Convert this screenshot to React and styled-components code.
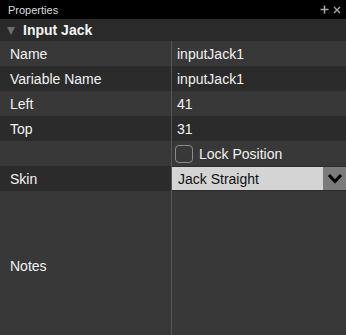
import React from 'react'
import styled, { createGlobalStyle } from 'styled-components'

const Global = createGlobalStyle`
  html, body { margin: 0; padding: 0; background: #383838; }
  body { font-family: "Liberation Sans", Arial, Helvetica, sans-serif; }
`

const Panel = styled.div`
  width: 346px;
  height: 335px;
  display: flex;
  flex-direction: column;
  background: #383838;
  color: #f2f2f2;
  overflow: hidden;
`

const TitleBar = styled.div`
  height: 19px;
  flex: none;
  background: #000;
  display: flex;
  align-items: center;
  justify-content: space-between;
  padding: 0 5px 0 8px;
  font-size: 11px;
  color: #dcdcdc;
`

const TitleTools = styled.div`
  display: flex;
  align-items: center;
  gap: 4px;
  color: #a8a8a8;
`

const Section = styled.div`
  height: 22px;
  flex: none;
  background: #2a2a2a;
  display: flex;
  align-items: center;
  gap: 8px;
  padding-left: 7px;
  font-size: 14px;
  font-weight: bold;
  color: #f4f4f4;
`

const Row = styled.div`
  display: grid;
  grid-template-columns: 172px 1fr;
  height: 25px;
  flex: ${({ $grow }) => ($grow ? '1' : 'none')};
  background: ${({ $dark }) => ($dark ? '#2b2b2b' : '#383838')};
  font-size: 14px;
`

const Label = styled.div`
  display: flex;
  align-items: center;
  padding-left: 10px;
  padding-top: ${({ $offset }) => $offset || '0'};
  border-right: 1px solid #555;
`

const Value = styled.div`
  display: flex;
  align-items: center;
  padding-left: 5px;
  min-width: 0;
`

const Check = styled.span`
  box-sizing: border-box;
  width: 18px;
  height: 18px;
  border: 1px solid #8a8a8a;
  border-radius: 4px;
  margin: 0 6px 0 -2px;
  flex: none;
`

const Select = styled.div`
  flex: 1;
  align-self: stretch;
  margin: 1px 0 1px -5px;
  display: flex;
  background: #d4d4d4;
  color: #111;
`

const SelectText = styled.div`
  flex: 1;
  display: flex;
  align-items: center;
  padding-left: 6px;
`

const Chevron = styled.div`
  width: 23px;
  background: #7b7b7b;
  display: flex;
  align-items: center;
  justify-content: center;
`

const rows = [
  { label: 'Name', value: 'inputJack1' },
  { label: 'Variable Name', value: 'inputJack1' },
  { label: 'Left', value: '41' },
  { label: 'Top', value: '31' },
]

export default function App() {
  return (
    <Panel>
      <Global />
      <TitleBar>
        <span>Properties</span>
        <TitleTools>
          <svg width="9" height="9" viewBox="0 0 9 9">
            <path d="M4.5 0.5v8M0.5 4.5h8" stroke="currentColor" strokeWidth="1.5" />
          </svg>
          <svg width="8" height="8" viewBox="0 0 8 8">
            <path d="M1 1l6 6M7 1l-6 6" stroke="currentColor" strokeWidth="1.4" />
          </svg>
        </TitleTools>
      </TitleBar>
      <Section>
        <svg width="8" height="9" viewBox="0 0 8 9">
          <path d="M0 1h8L4 9z" fill="#6e6e6e" />
        </svg>
        Input Jack
      </Section>
      {rows.map((r, i) => (
        <Row key={r.label} $dark={i % 2 === 1}>
          <Label>{r.label}</Label>
          <Value>{r.value}</Value>
        </Row>
      ))}
      <Row>
        <Label />
        <Value>
          <Check />
          Lock Position
        </Value>
      </Row>
      <Row $dark>
        <Label>Skin</Label>
        <Value>
          <Select>
            <SelectText>Jack Straight</SelectText>
            <Chevron>
              <svg width="16" height="11" viewBox="0 0 16 11">
                <path d="M2 2l6 6.5 6-6.5" stroke="#000" strokeWidth="3" fill="none" />
              </svg>
            </Chevron>
          </Select>
        </Value>
      </Row>
      <Row $grow>
        <Label $offset="6px">Notes</Label>
        <Value />
      </Row>
    </Panel>
  )
}
